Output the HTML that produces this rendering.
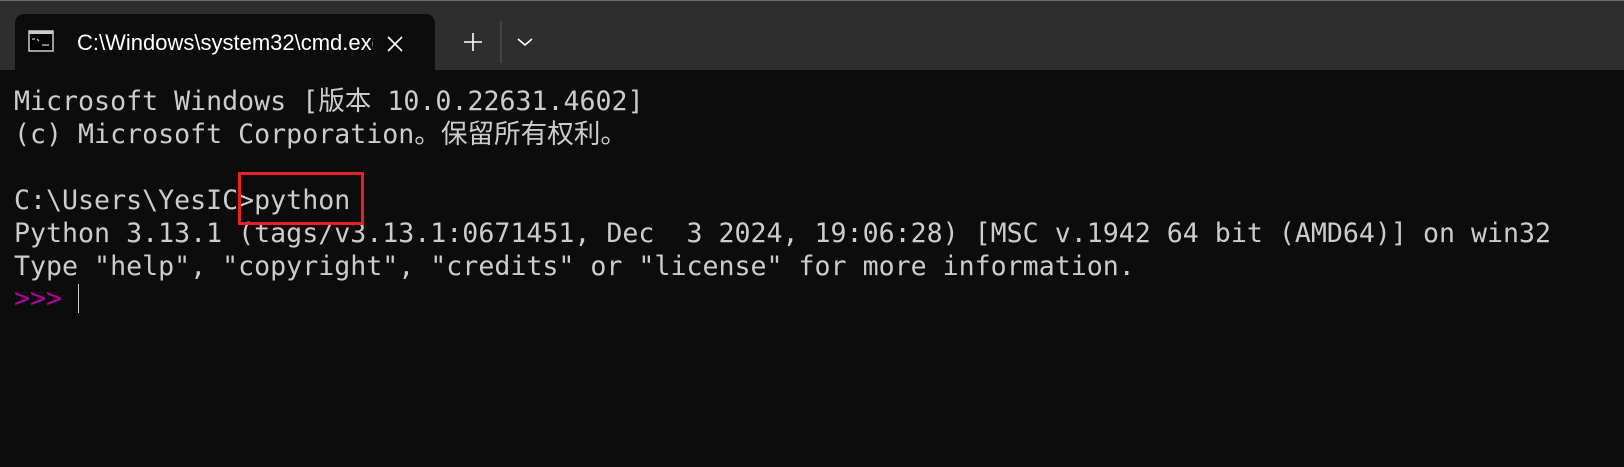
<!DOCTYPE html>
<html><head><meta charset="utf-8"><style>
body{margin:0;width:1624px;height:467px;background:#0c0c0c;overflow:hidden;position:relative;font-family:"Liberation Sans",sans-serif}
.bar{position:absolute;left:0;top:1px;width:1624px;height:69px;background:#2e2e2e}
.top{position:absolute;left:0;top:0;width:1624px;height:2px;background:#6a6a6a}
.tab{position:absolute;left:15px;top:14px;width:420px;height:60px;background:#0c0c0c;border-radius:9px 9px 0 0}
.title{position:absolute;left:77px;top:30px;color:#fff;font-size:22px;width:296px;overflow:hidden;white-space:nowrap}
.term{position:absolute;left:14px;top:86px;color:#cccccc;font-family:"DejaVu Sans Mono","Noto Sans CJK SC",monospace;font-size:26.6px;line-height:32.9px;white-space:pre;letter-spacing:0}
.mg{color:#b4009e}
</style></head><body>
<div class="top"></div>
<div class="bar"></div>
<div class="tab"></div>
<svg style="position:absolute;left:28px;top:30px" width="26" height="22"><rect x="1" y="1" width="24" height="20" fill="#000" stroke="#ccc" stroke-width="1.5"/><rect x="1" y="1" width="24" height="3" fill="#ccc"/><path d="M4 9h3M9 9l2 2M14 15h7" stroke="#ccc" stroke-width="1.2"/></svg>
<div class="title">C:\Windows\system32\cmd.exe</div>
<svg style="position:absolute;left:386px;top:35px" width="18" height="18"><path d="M2 2L16 16M16 2L2 16" stroke="#fff" stroke-width="1.6"/></svg>
<svg style="position:absolute;left:463px;top:32px" width="20" height="20"><path d="M10 1V19M1 10H19" stroke="#fff" stroke-width="1.6"/></svg>
<div style="position:absolute;left:500px;top:21px;width:2px;height:42px;background:#444"></div>
<svg style="position:absolute;left:517px;top:37px" width="16" height="10"><path d="M1 2L8 8L15 2" stroke="#fff" stroke-width="1.6" fill="none"/></svg>
<div class="term">Microsoft Windows [版本 10.0.22631.4602]
(c) Microsoft Corporation。保留所有权利。

C:\Users\YesIC>python
Python 3.13.1 (tags/v3.13.1:0671451, Dec  3 2024, 19:06:28) [MSC v.1942 64 bit (AMD64)] on win32
Type "help", "copyright", "credits" or "license" for more information.
<span class="mg">&gt;&gt;&gt;</span> </div>
<div style="position:absolute;left:78px;top:284px;width:1px;height:29px;background:#ccc"></div>
<div style="position:absolute;left:238px;top:172px;width:120px;height:47px;border:3px solid #e8202a"></div>
</body></html>
